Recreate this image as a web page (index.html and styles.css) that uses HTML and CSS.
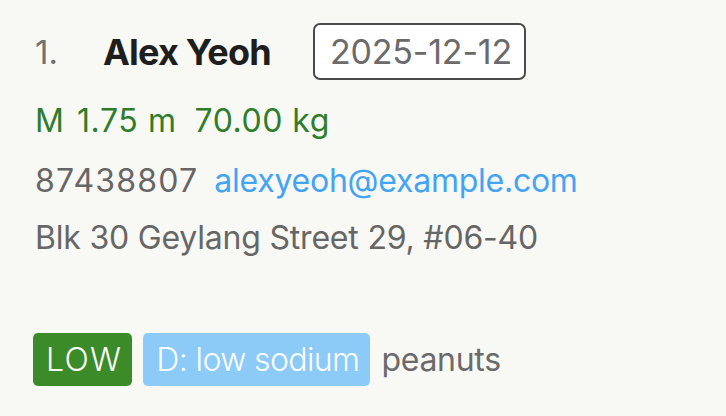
FILE: index.html
```html
<!DOCTYPE html>
<html>
<head>
<meta charset="utf-8">
<link rel="stylesheet" href="styles.css">
</head>
<body>
<div class="card">
  <div class="row head">
    <span class="index">1.</span>
    <span class="name">Alex Yeoh</span>
    <span class="date">2025-12-12</span>
  </div>
  <div class="row stats">
    <span>M</span><span>1.75 m</span><span>70.00 kg</span>
  </div>
  <div class="row contact">
    <span class="phone">87438807</span>
    <span class="email">alexyeoh@example.com</span>
  </div>
  <div class="row address">Blk 30 Geylang Street 29, #06-40</div>
  <div class="row tags">
    <span class="tag low">LOW</span>
    <span class="tag diet">D: low sodium</span>
    <span class="allergy">peanuts</span>
  </div>
</div>
</body>
</html>
```

FILE: styles.css
```css
html, body {
  margin: 0;
  padding: 0;
  background: #f8f8f4;
}
body {
  font-family: Inter, "Noto Sans", sans-serif;
  color: #666;
}
.card {
  display: flex;
  flex-direction: column;
  padding: 23px 0 0 35px;
}
.row {
  display: flex;
  align-items: center;
}
.head {
  height: 57px;
}
.index {
  font-size: 33px;
  color: #707070;
  width: 68px;
}
.name {
  font-size: 36px;
  font-weight: 700;
  color: #1e1e1e;
  letter-spacing: -0.8px;
  width: 210px;
}
.date {
  box-sizing: border-box;
  height: 57px;
  padding: 0 12px 0 15px;
  display: flex;
  align-items: center;
  border: 2px solid #4a4a4a;
  border-radius: 7px;
  background: #fff;
  font-size: 34px;
  letter-spacing: -0.2px;
  color: #6a6a6a;
}
.stats {
  margin-top: 20px;
  height: 40px;
  gap: 13px;
  font-size: 32px;
  color: #2f7d2b;
}
.stats span:nth-child(2) {
  letter-spacing: 0.6px;
}
.stats span:last-child {
  margin-left: 5px;
  letter-spacing: 0.5px;
}
.contact {
  margin-top: 20px;
  height: 40px;
  font-size: 32px;
}
.phone {
  letter-spacing: 1.2px;
  margin-right: 16px;
}
.email {
  color: #43a4f4;
  letter-spacing: -0.25px;
}
.address {
  margin-top: 17px;
  height: 40px;
  font-size: 32px;
  letter-spacing: -0.2px;
}
.tags {
  margin-top: 76px;
  margin-left: -2px;
  gap: 11px;
}
.tag {
  height: 53px;
  box-sizing: border-box;
  display: flex;
  align-items: center;
  padding: 0 11px 0 13px;
  border-radius: 5px;
  color: #fff;
  font-size: 32px;
  font-weight: 300;
}
.low {
  background: #3b8c29;
  letter-spacing: 1.3px;
  padding-right: 10px;
}
.diet {
  background: #8ccbf8;
  letter-spacing: -0.6px;
}
.allergy {
  font-size: 32px;
  letter-spacing: -0.3px;
  color: #6a6a6a;
}
```
